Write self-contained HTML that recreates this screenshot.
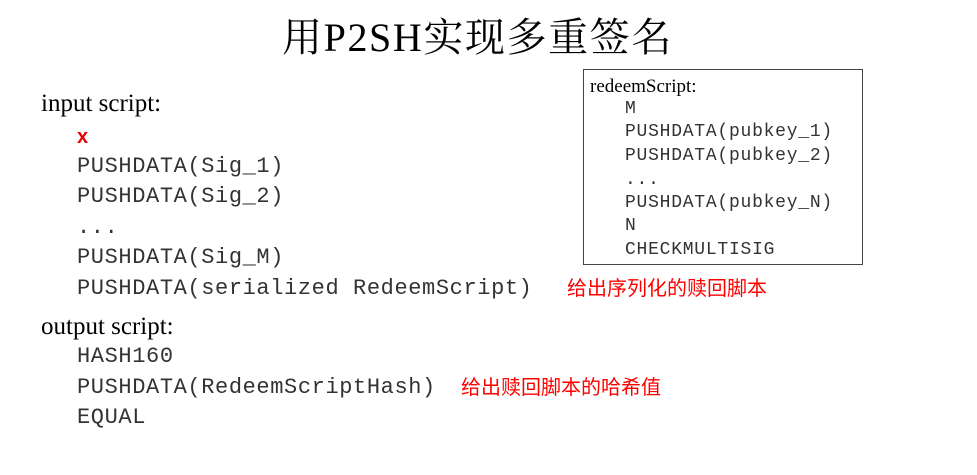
<!DOCTYPE html>
<html><head><meta charset="utf-8"><style>
body{margin:0;width:977px;height:475px;background:#fff;position:relative;overflow:hidden}
div{position:absolute;white-space:nowrap;line-height:30px;height:30px}
.t{font-family:"Liberation Serif","Noto Serif CJK SC",serif;font-size:25px;color:#000}
.m{font-family:"Liberation Mono",monospace;font-size:22px;letter-spacing:0.6px;color:#333;left:77px}
.s{font-family:"Liberation Mono",monospace;font-size:18px;letter-spacing:0.75px;color:#333;left:625px;line-height:24px;height:24px}
.r{font-family:"Liberation Sans","Noto Sans CJK SC",sans-serif;font-size:20px;color:#f00}
</style></head><body>
<div style="left:282px;top:13px;height:50px;line-height:50px;font-family:'Liberation Serif','Noto Serif CJK SC',serif;font-size:40px;letter-spacing:1.6px">用P2SH实现多重签名</div>
<div class="t" style="left:41px;top:89px">input script:</div>
<div style="left:77px;top:122px;color:#e00;font-family:'Liberation Sans',sans-serif;font-weight:bold;font-size:20px">x</div>
<div class="m" style="top:152px">PUSHDATA(Sig_1)</div>
<div class="m" style="top:182px">PUSHDATA(Sig_2)</div>
<div class="m" style="top:213px">...</div>
<div class="m" style="top:243px">PUSHDATA(Sig_M)</div>
<div class="m" style="top:274px">PUSHDATA(serialized RedeemScript)</div>
<div class="r" style="left:567px;top:274px">给出序列化的赎回脚本</div>
<div class="t" style="left:41px;top:312px">output script:</div>
<div class="m" style="top:342px">HASH160</div>
<div class="m" style="top:373px">PUSHDATA(RedeemScriptHash)</div>
<div class="r" style="left:461px;top:373px">给出赎回脚本的哈希值</div>
<div class="m" style="top:403px">EQUAL</div>
<div style="left:583px;top:69px;width:278px;height:194px;border:1.5px solid #444"></div>
<div style="left:590px;top:75px;font-family:'Liberation Serif',serif;font-size:19px;line-height:24px;height:24px">redeemScript:</div>
<div class="s" style="top:97px">M</div>
<div class="s" style="top:120px">PUSHDATA(pubkey_1)</div>
<div class="s" style="top:144px">PUSHDATA(pubkey_2)</div>
<div class="s" style="top:168px">...</div>
<div class="s" style="top:191px">PUSHDATA(pubkey_N)</div>
<div class="s" style="top:214px">N</div>
<div class="s" style="top:238px">CHECKMULTISIG</div>
</body></html>
